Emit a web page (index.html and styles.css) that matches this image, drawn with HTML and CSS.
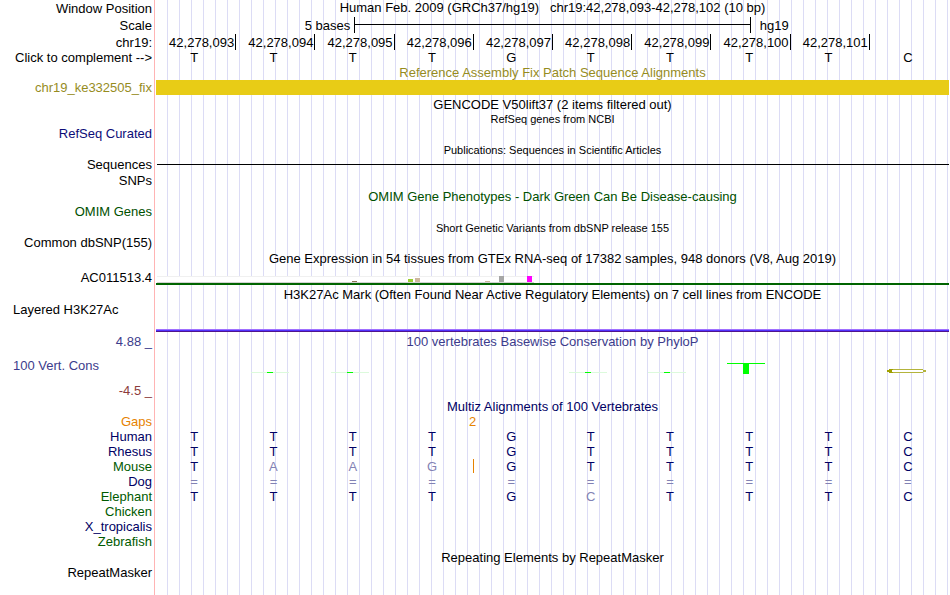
FILE: index.html
```html
<!DOCTYPE html>
<html lang="en">
  <head>
    <meta charset="utf-8">
    <title>chr19:42,278,093-42,278,102 hg19</title>
    <link rel="stylesheet" href="styles.css">
  </head>
  <body>
    <main class="browser">
      <!-- position, scale and ruler -->
      <section class="track position">
        <div class="row"><div class="label">Window Position</div><div class="title">Human Feb. 2009 (GRCh37/hg19) &nbsp; chr19:42,278,093-42,278,102 (10 bp)</div></div>
        <div class="row">
          <div class="label">Scale</div>
          <div class="scale"><span class="bases-label">5 bases</span><span class="scale-bar"></span><span class="assembly">hg19</span></div>
        </div>
        <div class="row">
          <div class="label">chr19:</div>
          <div class="cells ruler"><span>42,278,093</span><span>42,278,094</span><span>42,278,095</span><span>42,278,096</span><span>42,278,097</span><span>42,278,098</span><span>42,278,099</span><span>42,278,100</span><span>42,278,101</span></div>
        </div>
      </section>
      <section class="track">
        <div class="row">
          <div class="label">Click to complement --&gt;</div>
          <div class="cells bases"><span>T</span><span>T</span><span>T</span><span>T</span><span>G</span><span>T</span><span>T</span><span>T</span><span>T</span><span>C</span></div>
        </div>
      </section>

      <section class="track patch">
        <h2 class="title">Reference Assembly Fix Patch Sequence Alignments</h2>
        <div class="row"><div class="label">chr19_ke332505_fix</div><div class="patch-bar"></div></div>
      </section>

      <section class="track wide-gap">
        <h2 class="title">GENCODE V50lift37 (2 items filtered out)</h2>
        <h2 class="title small">RefSeq genes from NCBI</h2>
        <div class="row navy"><div class="label">RefSeq Curated</div></div>
      </section>

      <section class="track spaced">
        <h2 class="title small">Publications: Sequences in Scientific Articles</h2>
        <div class="row"><div class="label">Sequences</div><div class="sequence-line"></div></div>
        <div class="row snps"><div class="label">SNPs</div></div>
      </section>

      <section class="track spaced omim">
        <h2 class="title">OMIM Gene Phenotypes - Dark Green Can Be Disease-causing</h2>
        <div class="row"><div class="label">OMIM Genes</div></div>
      </section>

      <section class="track spaced">
        <h2 class="title small">Short Genetic Variants from dbSNP release 155</h2>
        <div class="row"><div class="label">Common dbSNP(155)</div></div>
      </section>

      <section class="track spaced">
        <h2 class="title">Gene Expression in 54 tissues from GTEx RNA-seq of 17382 samples, 948 donors (V8, Aug 2019)</h2>
        <div class="row gtex">
          <div class="label">AC011513.4</div>
          <div class="gene">
            <svg width="378" height="7" shape-rendering="crispEdges">
              <rect x="1" width="377" height="7" fill="#fff"/>
              <rect x="1" width="377" height="1" fill="#f0f0f0"/>
              <rect x="1" y="6" width="377" height="1" fill="#d2d2d2"/>
              <rect x="196" y="5" width="5" height="1" fill="#8b7355"/>
              <rect x="252" y="3" width="5" height="3" fill="#9acd32"/>
              <rect x="259" y="2" width="5" height="4" fill="#cdb79e"/>
              <rect x="329" y="5" width="5" height="1" fill="#cdb79e"/>
              <rect x="343" width="5" height="6" fill="#a6a6a6"/>
              <rect x="371" width="5" height="6" fill="#f0f"/>
            </svg>
          </div>
        </div>
      </section>

      <section class="track wide-gap">
        <h2 class="title">H3K27Ac Mark (Often Found Near Active Regulatory Elements) on 7 cell lines from ENCODE</h2>
        <div class="row h3k27ac"><div class="label left">Layered H3K27Ac</div><div class="signal"></div></div>
      </section>

      <section class="track spaced phylop">
        <div class="row"><div class="label">4.88 _</div><h2 class="title">100 vertebrates Basewise Conservation by PhyloP</h2></div>
        <div class="row cons">
          <div class="label left">100 Vert. Cons</div>
          <!-- base letters scaled by conservation, most of them nearly flat -->
          <div class="cells logo">
            <span></span>
            <span><svg width="38" height="15"><path class="faint" d="M0 10h38v1H0z"/><path class="green" d="M16 10h6v1h-6z"/></svg></span>
            <span><svg width="38" height="15"><path class="faint" d="M0 10h38v1H0z"/><path class="green" d="M16 10h6v1h-6z"/></svg></span>
            <span></span>
            <span></span>
            <span><svg width="38" height="15"><path class="faint" d="M0 10h38v1H0z"/><path class="green" d="M16 10h6v1h-6z"/></svg></span>
            <span><svg width="38" height="15"><path class="faint" d="M0 10h38v1H0z"/><path class="green" d="M16 10h6v1h-6z"/></svg></span>
            <span><svg width="38" height="15"><path class="green" d="M0 1h38v1H22v10h-6V2H0z"/></svg></span>
            <span></span>
            <span><svg width="42" height="15"><path class="olive" d="M4 7.5h32l4 1.5-4 1.5H4L1 9z"/><path class="olive-tip" d="M0 9l4-2h3v1H6v2h1v1H4z"/></svg></span>
          </div>
        </div>
        <div class="row minimum"><div class="label">-4.5 _</div></div>
      </section>

      <section class="track spaced multiz">
        <h2 class="title">Multiz Alignments of 100 Vertebrates</h2>
        <div class="row gaps"><div class="label">Gaps</div><div class="insert"><span>2</span></div></div>
        <div class="row"><div class="label">Human</div><div class="cells bases"><span>T</span><span>T</span><span>T</span><span>T</span><span>G</span><span>T</span><span>T</span><span>T</span><span>T</span><span>C</span></div></div>
        <div class="row"><div class="label">Rhesus</div><div class="cells bases"><span>T</span><span>T</span><span>T</span><span>T</span><span>G</span><span>T</span><span>T</span><span>T</span><span>T</span><span>C</span></div></div>
        <div class="row"><div class="label green-label">Mouse</div><div class="cells bases"><span>T</span><span class="diff">A</span><span class="diff">A</span><span class="diff">G</span><span class="gap-before">G</span><span>T</span><span>T</span><span>T</span><span>T</span><span>C</span></div></div>
        <div class="row"><div class="label">Dog</div><div class="cells bases diff"><span>=</span><span>=</span><span>=</span><span>=</span><span>=</span><span>=</span><span>=</span><span>=</span><span>=</span><span>=</span></div></div>
        <div class="row"><div class="label green-label">Elephant</div><div class="cells bases"><span>T</span><span>T</span><span>T</span><span>T</span><span>G</span><span class="diff">C</span><span>T</span><span>T</span><span>T</span><span>C</span></div></div>
        <div class="row"><div class="label green-label">Chicken</div></div>
        <div class="row"><div class="label">X_tropicalis</div></div>
        <div class="row"><div class="label green-label">Zebrafish</div></div>
      </section>

      <section class="track spaced">
        <h2 class="title">Repeating Elements by RepeatMasker</h2>
        <div class="row"><div class="label">RepeatMasker</div></div>
      </section>
    </main>
  </body>
</html>
```

FILE: styles.css
```css
body {
  margin: 0;
  background: #fff;
  color: #000;
  font: 13px/15px "Liberation Sans", Arial, sans-serif;
}
/* pink divider after the labels, guide lines every 12px behind the tracks */
.browser {
  min-height: 100vh;
  box-sizing: border-box;
  padding-right: 1px;
  background:
    linear-gradient(#ffb4b4, #ffb4b4) 154px 0 / 1px 100% no-repeat,
    linear-gradient(#fff, #fff) 0 0 / 156px 100% no-repeat,
    repeating-linear-gradient(to right, #fff 0, #fff 11px, #dcdcf5 11px, #dcdcf5 12px);
}
.row {
  display: grid;
  grid-template-columns: 156px minmax(0, 1fr);
  min-height: 15px;
}
.spaced {
  margin-top: 2px;
}
.wide-gap {
  margin-top: 3px;
}
.label {
  padding-right: 4px;
  text-align: right;
  white-space: nowrap;
}
.label.left {
  padding-left: 13px;
  text-align: left;
}
.title {
  margin: 0;
  font-size: 13px;
  font-weight: normal;
  text-align: center;
  white-space: nowrap;
}
h2.title {
  line-height: 14px;
}
.track > .title {
  margin-left: 156px;
}
h2.small {
  font-size: 11px;
}

.position .row + .row {
  margin-top: 1px;
}
.position .label,
.position .bases-label,
.position .assembly,
.ruler span {
  padding-top: 1px;
}
.scale {
  display: grid;
  grid-template-columns: 1fr 2fr 1fr;
}
.bases-label {
  padding-right: 4px;
  text-align: right;
}
.scale-bar {
  border: solid #000;
  border-width: 0 1px;
  background: linear-gradient(#000, #000) 0 7px / 100% 1px no-repeat;
}
.assembly {
  padding-left: 9px;
}
.cells {
  display: grid;
  grid-template-columns: repeat(10, minmax(0, 1fr));
}
.ruler {
  margin-left: 1px;
}
.ruler span {
  padding-right: 1px;
  border-right: 1px solid #000;
  text-align: right;
}
.bases {
  text-align: center;
}
.bases span {
  padding-right: 3px;
}

.patch {
  margin-top: 1px;
  color: #968c1e;
}
.patch-bar {
  background: #e8cc16;
}
.navy {
  color: #0c0c78;
}
.sequence-line {
  margin-left: 1px;
  background: linear-gradient(#000, #000) 0 7px / 100% 1px no-repeat;
}
.snps {
  margin-top: 1px;
}
.omim {
  color: #005000;
}
.gtex {
  margin-top: 4px;
}
.gene {
  display: flex;
  align-items: flex-end;
  border-bottom: 2px solid #006400;
}
.gene svg {
  display: block;
}
.h3k27ac {
  height: 30px;
}
.signal {
  border-bottom: 1px solid #50148c;
  background: linear-gradient(#a070ff 1px, #5032ff 1px) 0 100% / 100% 2px no-repeat;
}

.phylop {
  color: #3c3c8c;
}
.phylop h2.title {
  line-height: 16px;
}
.cons {
  padding-top: 8px;
}
.logo svg {
  display: block;
  margin: 4px 0 0 16px;
  shape-rendering: crispEdges;
}
.faint {
  fill: #dcfadc;
}
.green {
  fill: #0f0;
}
.olive {
  fill: #fff;
  stroke: #b4b43c;
}
.olive-tip {
  fill: #a0a000;
}
.minimum {
  margin-top: 6px;
  color: #8c3c3c;
}
.multiz {
  color: #000064;
}
.gaps {
  color: #e68200;
}
.insert {
  display: grid;
  grid-template-columns: 2fr 3fr;
}
.insert span {
  margin-right: -3px;
  text-align: right;
}
.green-label {
  color: #005a00;
}
.diff {
  color: #8282b4;
}
.gap-before {
  background: linear-gradient(#e68200, #e68200) 0 0 / 1px 14px no-repeat;
}
```
